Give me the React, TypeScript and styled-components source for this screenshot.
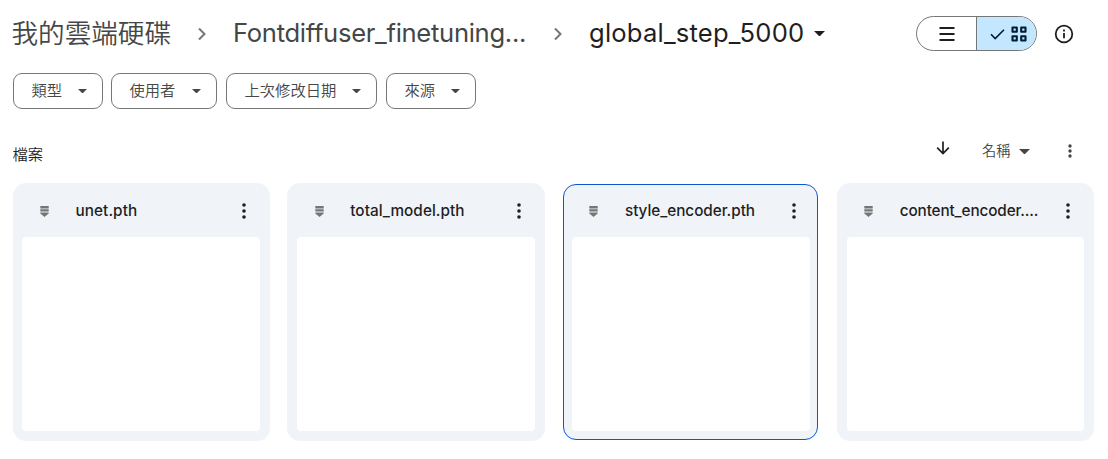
import React from "react";
import styled, { createGlobalStyle, css } from "styled-components";

const GlobalStyle = createGlobalStyle`
  * { box-sizing: border-box; }
  body { margin: 0; background: #fff; color: #1f1f1f; overflow: hidden;
    font-family: Inter, "Noto Sans CJK TC", sans-serif; }
  button { font: inherit; color: inherit; background: none; border: 0; padding: 0; margin: 0; }
  svg { display: block; flex: none; }
`;

const Page = styled.main`
  width: 1108px;
  height: 459px;
  display: flex;
  flex-direction: column;
`;

const Header = styled.header`
  height: 67px;
  display: flex;
  align-items: center;
  justify-content: space-between;
  padding: 0 34px 0 12px;
`;

const Breadcrumbs = styled.nav`
  display: flex;
  align-items: center;
  color: #444746;
`;

const Crumb = styled.span<{ $width: number; $spacing?: number; $current?: boolean }>`
  width: ${(p) => p.$width}px;
  font-size: 25.6px;
  font-weight: 390;
  line-height: 34px;
  padding-bottom: 2px;
  white-space: nowrap;
  letter-spacing: ${(p) => p.$spacing ?? 0}px;
  color: ${(p) => (p.$current ? "#1f1f1f" : "#444746")};
`;

const CjkCrumb = styled(Crumb)`
  font-family: "Noto Sans CJK TC", sans-serif;
  font-size: 26.6px;
  font-weight: 350;
  padding-bottom: 4px;
  margin-left: -0.5px;
`;

const Separator = styled.span`
  width: 62px;
  display: flex;
  justify-content: center;
`;

const CurrentCaret = styled.span`
  color: #1f1f1f;
`;

const HeaderActions = styled.div`
  display: flex;
  align-items: center;
  gap: 17px;
`;

const Toggle = styled.div`
  width: 121px;
  height: 35px;
  display: grid;
  grid-template-columns: 59px 60px;
  border: 1px solid #747775;
  border-radius: 18px;
  overflow: hidden;
`;

const ToggleHalf = styled.button<{ $active?: boolean }>`
  display: flex;
  align-items: center;
  justify-content: center;
  gap: 6px;
  ${(p) =>
    p.$active &&
    css`
      background: #c2e7ff;
      border-left: 1px solid #747775;
      padding-left: 3px;
    `}
`;

const Filters = styled.div`
  display: flex;
  gap: 9px;
  padding: 6px 13px 0;
`;

const Chip = styled.button<{ $width: number }>`
  width: ${(p) => p.$width}px;
  height: 36px;
  display: flex;
  align-items: center;
  justify-content: space-between;
  padding: 0 15.5px 0 17.5px;
  border: 1px solid #747775;
  border-radius: 9px;
  color: #444746;
  font-family: "Noto Sans CJK TC", sans-serif;
  font-size: 15.3px;
  font-weight: 350;

  &:first-child {
    margin-right: -1px;
  }
`;

const ChipLabel = styled.span`
  line-height: 20px;
  padding-bottom: 4px;
`;

const SectionBar = styled.div`
  height: 74px;
  display: flex;
  align-items: center;
  justify-content: space-between;
  padding: 8px 36px 0 12.5px;
  font-family: "Noto Sans CJK TC", sans-serif;
  font-weight: 350;
`;

const SectionTitle = styled.h2`
  margin: 6px 0 0;
  font-size: 15.3px;
  font-weight: 350;
`;

const Sort = styled.div`
  display: flex;
  align-items: center;
  color: #444746;
`;

const SortLabel = styled.span`
  margin: 0 8px 0 32px;
  font-size: 14.3px;
  line-height: 20px;
`;

const SortArrow = styled.span`
  margin-bottom: 4px;
`;

const MenuSlot = styled.span`
  margin: 2px 0 0 38.5px;
`;

const SortCaret = styled.span`
  margin-top: 3px;
`;

const Grid = styled.section`
  display: grid;
  grid-template-columns: repeat(4, 257.2px);
  column-gap: 17.6px;
  padding-left: 12.6px;
`;

const Card = styled.article<{ $selected?: boolean }>`
  height: 258px;
  display: flex;
  flex-direction: column;
  padding: 0 9.7px 10px;
  border-radius: 13px;
  background: #f0f4f9;
  ${(p) =>
    p.$selected &&
    css`
      height: 256px;
      margin: 1px;
      padding: 0 7.6px 8px;
      border: 1px solid #0b57d0;
    `}
`;

const CardHead = styled.div<{ $selected?: boolean }>`
  height: ${(p) => (p.$selected ? 52 : 54)}px;
  display: flex;
  align-items: center;
  padding: ${(p) => (p.$selected ? 0 : 2)}px 14px 0 17.5px;
`;

const FileName = styled.span<{ $spacing: number }>`
  flex: 1;
  margin-left: 26.7px;
  font-size: 15.3px;
  font-weight: 470;
  line-height: 20px;
  letter-spacing: ${(p) => p.$spacing}px;
  white-space: nowrap;
`;

const Preview = styled.div`
  flex: 1;
  border-radius: 4px;
  background: #fff;
`;

const Chevron = () => (
  <svg width="10" height="14" viewBox="0 0 10 14" fill="none" stroke="#747775" strokeWidth="2">
    <path d="M2 1.5 7.5 7 2 12.5" />
  </svg>
);

const Caret = ({ w = 9, h = 4.5 }: { w?: number; h?: number }) => (
  <svg width={w} height={h} viewBox="0 0 10 5" preserveAspectRatio="none" fill="currentColor">
    <path d="M0 0h10L5 5z" />
  </svg>
);

const Dots = ({ step = 6, r = 1.8 }: { step?: number; r?: number }) => (
  <svg width="4" height="16" viewBox="0 0 4 16" fill="currentColor">
    <circle cx="2" cy={8 - step} r={r} />
    <circle cx="2" cy="8" r={r} />
    <circle cx="2" cy={8 + step} r={r} />
  </svg>
);

const FileIcon = () => (
  <svg width="9" height="11" viewBox="0 0 9 11" fill="#747775">
    <path d="M.3 0h8.4v2.4H.3zM.3 3.2h8.4v2.4H.3zM.3 6.4h8.4v1.2L4.5 11 .3 7.6z" />
  </svg>
);

const files = [
  { name: "unet.pth", spacing: 0.08 },
  { name: "total_model.pth", spacing: 0.06 },
  { name: "style_encoder.pth", spacing: -0.04 },
  { name: "content_encoder....", spacing: -0.13 },
];
const selectedFile = "style_encoder.pth";

const filters = [
  { label: "類型", width: 90 },
  { label: "使用者", width: 106 },
  { label: "上次修改日期", width: 151 },
  { label: "來源", width: 90 },
];

export default function App() {
  return (
    <Page>
      <GlobalStyle />
      <Header>
        <Breadcrumbs>
          <CjkCrumb $width={159.5}>我的雲端硬碟</CjkCrumb>
          <Separator><Chevron /></Separator>
          <Crumb $width={294} $spacing={-0.3}>Fontdiffuser_finetuning...</Crumb>
          <Separator><Chevron /></Separator>
          <Crumb $width={224.5} $spacing={0.2} $current>global_step_5000</Crumb>
          <CurrentCaret><Caret w={11} h={5.5} /></CurrentCaret>
        </Breadcrumbs>
        <HeaderActions>
          <Toggle>
            <ToggleHalf aria-label="List">
              <svg width="16" height="14" viewBox="0 0 16 14" stroke="#1f1f1f" strokeWidth="2">
                <path d="M.5 1h15M.5 7h15M.5 13h15" />
              </svg>
            </ToggleHalf>
            <ToggleHalf $active aria-label="Grid">
              <svg width="15" height="12" viewBox="0 0 15 12" fill="none" stroke="#001d35" strokeWidth="1.6">
                <path d="M1 6.3 5.2 10.5 14 1.7" />
              </svg>
              <svg width="16" height="16" viewBox="0 0 16 16" fill="none" stroke="#001d35" strokeWidth="2.1">
                <path d="M1.5 1.5h4.3v4.3H1.5zM10.2 1.5h4.3v4.3h-4.3zM1.5 10.2h4.3v4.3H1.5zM10.2 10.2h4.3v4.3h-4.3z" strokeLinejoin="round" />
              </svg>
            </ToggleHalf>
          </Toggle>
          <svg width="20" height="20" viewBox="0 0 20 20" fill="none" stroke="#1f1f1f" strokeWidth="1.8">
            <circle cx="10" cy="10" r="8.3" />
            <path d="M10 9v5.2M10 5.6v2" />
          </svg>
        </HeaderActions>
      </Header>
      <Filters>
        {filters.map((f) => (
          <Chip key={f.label} $width={f.width}>
            <ChipLabel>{f.label}</ChipLabel>
            <Caret />
          </Chip>
        ))}
      </Filters>
      <SectionBar>
        <SectionTitle>檔案</SectionTitle>
        <Sort>
          <SortArrow>
            <svg width="14" height="14" viewBox="0 0 14 14" fill="none" stroke="#1f1f1f" strokeWidth="1.7">
              <path d="M7 .5v12M1.2 6.7 7 12.5l5.8-5.8" />
            </svg>
          </SortArrow>
          <SortLabel>名稱</SortLabel>
          <SortCaret><Caret w={11} h={5.5} /></SortCaret>
          <MenuSlot><Dots step={5} r={1.7} /></MenuSlot>
        </Sort>
      </SectionBar>
      <Grid>
        {files.map((f) => (
          <Card key={f.name} $selected={f.name === selectedFile}>
            <CardHead $selected={f.name === selectedFile}>
              <FileIcon />
              <FileName $spacing={f.spacing}>{f.name}</FileName>
              <Dots />
            </CardHead>
            <Preview />
          </Card>
        ))}
      </Grid>
    </Page>
  );
}
